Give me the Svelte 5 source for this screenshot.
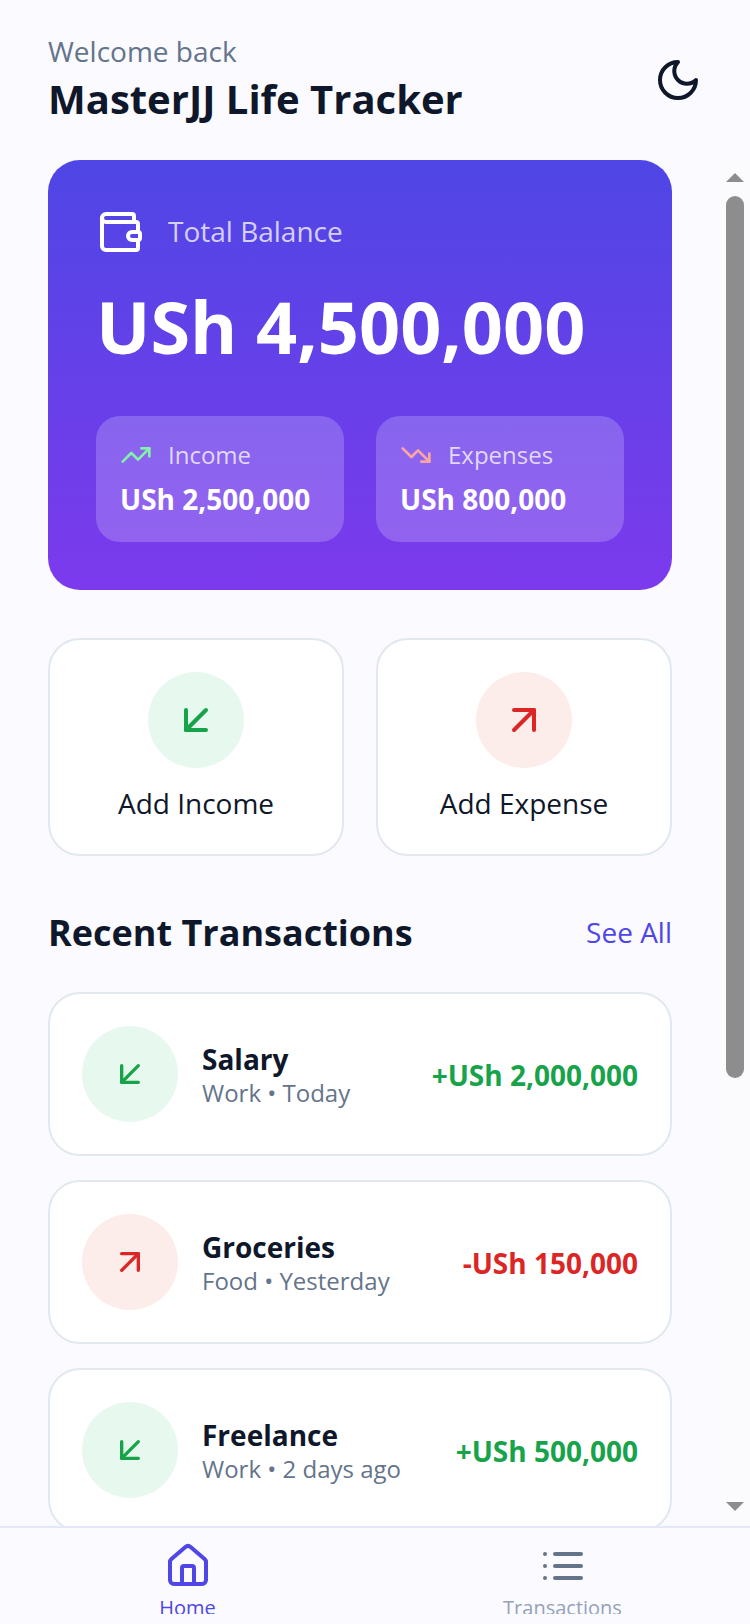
<script>
  const transactions = [
    { name: 'Salary', meta: 'Work • Today', amount: '+USh 2,000,000', income: true },
    { name: 'Groceries', meta: 'Food • Yesterday', amount: '-USh 150,000', income: false },
    { name: 'Freelance', meta: 'Work • 2 days ago', amount: '+USh 500,000', income: true },
  ];
</script>

{#snippet arrowIn(size)}
  <svg width={size} height={size} viewBox="0 0 24 24" fill="none" stroke="currentColor" stroke-width="2" stroke-linecap="round" stroke-linejoin="round">
    <path d="M17 7 7 17" /><path d="M17 17H7V7" />
  </svg>
{/snippet}

{#snippet arrowOut(size)}
  <svg width={size} height={size} viewBox="0 0 24 24" fill="none" stroke="currentColor" stroke-width="2" stroke-linecap="round" stroke-linejoin="round">
    <path d="M7 7h10v10" /><path d="M7 17 17 7" />
  </svg>
{/snippet}

<div class="app">
  <header class="header">
    <div>
      <p class="welcome">Welcome back</p>
      <h1 class="title">MasterJJ Life Tracker</h1>
    </div>
    <svg class="moon" width="48" height="48" viewBox="0 0 24 24" fill="none" stroke="currentColor" stroke-width="2" stroke-linecap="round" stroke-linejoin="round">
      <path d="M12 3a6 6 0 0 0 9 9 9 9 0 1 1-9-9Z" />
    </svg>
  </header>

  <div class="body">
    <main class="main">
      <section class="balance">
        <div class="balance-head">
          <svg class="wallet" width="48" height="48" viewBox="0 0 24 24" fill="none" stroke="currentColor" stroke-width="2" stroke-linecap="round" stroke-linejoin="round">
            <path d="M19 7V4a1 1 0 0 0-1-1H5a2 2 0 0 0 0 4h15a1 1 0 0 1 1 1v4h-3a2 2 0 0 0 0 4h3a1 1 0 0 0 1-1v-2a1 1 0 0 0-1-1" />
            <path d="M3 5v14a2 2 0 0 0 2 2h15a1 1 0 0 0 1-1v-4" />
          </svg>
          <span class="balance-label">Total Balance</span>
        </div>
        <div class="balance-value">USh 4,500,000</div>
        <div class="stats">
          <div class="stat">
            <div class="stat-head">
              <svg class="up" width="32" height="32" viewBox="0 0 24 24" fill="none" stroke="currentColor" stroke-width="2" stroke-linecap="round" stroke-linejoin="round">
                <path d="M22 7 13.5 15.5 8.5 10.5 2 17" /><path d="M16 7h6v6" />
              </svg>
              <span>Income</span>
            </div>
            <div class="stat-value">USh 2,500,000</div>
          </div>
          <div class="stat">
            <div class="stat-head">
              <svg class="down" width="32" height="32" viewBox="0 0 24 24" fill="none" stroke="currentColor" stroke-width="2" stroke-linecap="round" stroke-linejoin="round">
                <path d="M22 17 13.5 8.5 8.5 13.5 2 7" /><path d="M16 17h6v-6" />
              </svg>
              <span>Expenses</span>
            </div>
            <div class="stat-value">USh 800,000</div>
          </div>
        </div>
      </section>

      <section class="actions">
        <button class="action">
          <span class="circle income">{@render arrowIn(48)}</span>
          <span>Add Income</span>
        </button>
        <button class="action">
          <span class="circle expense">{@render arrowOut(48)}</span>
          <span>Add Expense</span>
        </button>
      </section>

      <div class="section-head">
        <h2>Recent Transactions</h2>
        <span class="see-all">See All</span>
      </div>

      <ul class="list">
        {#each transactions as t}
          <li class="row">
            <span class="circle" class:income={t.income} class:expense={!t.income}>
              {#if t.income}{@render arrowIn(40)}{:else}{@render arrowOut(40)}{/if}
            </span>
            <div class="row-text">
              <div class="row-name">{t.name}</div>
              <div class="row-meta">{t.meta}</div>
            </div>
            <div class="row-amount" class:pos={t.income} class:neg={!t.income}>{t.amount}</div>
          </li>
        {/each}
      </ul>
    </main>

    <div class="rail">
      <span class="tri tri-up"></span>
      <span class="thumb"></span>
      <span class="tri tri-down"></span>
    </div>
  </div>

  <nav class="nav">
    <div class="tab active">
      <svg class="tab-icon" width="48" height="48" viewBox="0 0 24 24" fill="none" stroke="currentColor" stroke-width="2" stroke-linecap="round" stroke-linejoin="round">
        <path d="M15 21v-8a1 1 0 0 0-1-1h-4a1 1 0 0 0-1 1v8" />
        <path d="M3 10a2 2 0 0 1 .709-1.528l7-5.999a2 2 0 0 1 2.582 0l7 5.999A2 2 0 0 1 21 10v9a2 2 0 0 1-2 2H5a2 2 0 0 1-2-2z" />
      </svg>
      <span class="tab-label">Home</span>
    </div>
    <div class="tab">
      <svg class="tab-icon list-icon" width="48" height="48" viewBox="0 0 24 24" fill="none" stroke="currentColor" stroke-width="2" stroke-linecap="round" stroke-linejoin="round">
        <path d="M8 6h13" /><path d="M8 12h13" /><path d="M8 18h13" />
        <path d="M3 6h.01" /><path d="M3 12h.01" /><path d="M3 18h.01" />
      </svg>
      <span class="tab-label">Transactions</span>
    </div>
  </nav>
</div>

<style>
  :global(html), :global(body) {
    margin: 0;
    height: 100%;
  }

  .app {
    display: flex;
    flex-direction: column;
    height: 1624px;
    overflow: hidden;
    background: #fafaff;
    color: #0f172a;
    font-family: 'Open Sans', sans-serif;
  }

  .header {
    display: flex;
    justify-content: space-between;
    align-items: flex-start;
    box-sizing: border-box;
    height: 160px;
    padding: 31px 48px 0;
    flex: none;
  }

  .welcome {
    margin: 0;
    font-size: 28px;
    line-height: 40px;
    color: #64748b;
  }

  .title {
    margin: 0;
    font-size: 40px;
    line-height: 56px;
    font-weight: 700;
  }

  .moon {
    margin-top: 25px;
    color: #0f172a;
  }

  .body {
    display: flex;
    flex: 1;
    min-height: 0;
  }

  .main {
    flex: 1;
    min-width: 0;
    overflow: hidden;
    padding: 0 48px;
  }

  .rail {
    display: flex;
    flex-direction: column;
    align-items: center;
    flex: none;
    box-sizing: border-box;
    width: 30px;
    padding: 13px 0 15px;
    background: #fbfbfd;
  }

  .thumb {
    width: 18px;
    height: 882px;
    margin-top: 14px;
    border-radius: 9px;
    background: #8d8d8d;
  }

  .tri {
    width: 0;
    height: 0;
    border-left: 9px solid transparent;
    border-right: 9px solid transparent;
  }

  .tri-up {
    border-bottom: 9px solid #8d8d8d;
  }

  .tri-down {
    margin-top: auto;
    border-top: 9px solid #8d8d8d;
  }

  .balance {
    box-sizing: border-box;
    height: 430px;
    padding: 48px;
    border-radius: 32px;
    color: #fff;
    background: linear-gradient(180deg, #4f46e5, #7c3aed);
  }

  .balance-head {
    display: flex;
    align-items: center;
    gap: 24px;
    height: 48px;
    font-size: 28px;
    line-height: 38px;
    color: rgba(255, 255, 255, 0.75);
  }

  .balance-label {
    margin-bottom: 2px;
  }

  .wallet {
    color: #fff;
  }

  .balance-value {
    margin-top: 22px;
    font-size: 72px;
    line-height: 96px;
    font-weight: 700;
    color: #fff;
  }

  .stats {
    display: grid;
    grid-template-columns: 1fr 1fr;
    gap: 32px;
    margin-top: 42px;
  }

  .stat {
    box-sizing: border-box;
    height: 126px;
    padding: 23px 24px;
    border-radius: 24px;
    background: rgba(255, 255, 255, 0.2);
  }

  .stat-head {
    display: flex;
    align-items: center;
    gap: 16px;
    font-size: 24px;
    line-height: 32px;
    color: rgba(255, 255, 255, 0.75);
  }

  .up {
    color: #86efac;
  }

  .down {
    color: #fca5a5;
  }

  .stat-value {
    margin-top: 8px;
    font-size: 28px;
    line-height: 40px;
    font-weight: 700;
  }

  .actions {
    display: grid;
    grid-template-columns: 1fr 1fr;
    gap: 32px;
    margin-top: 48px;
  }

  .action {
    display: flex;
    flex-direction: column;
    align-items: center;
    gap: 15px;
    height: 218px;
    padding: 32px;
    box-sizing: border-box;
    background: #fff;
    border: 2px solid #e2e8f0;
    border-radius: 32px;
    color: #0f172a;
    font: inherit;
    font-size: 28px;
    line-height: 40px;
  }

  .circle {
    display: flex;
    align-items: center;
    justify-content: center;
    flex: none;
    width: 96px;
    height: 96px;
    border-radius: 50%;
  }

  .circle.income {
    background: #e7f8ee;
    color: #16a34a;
  }

  .circle.expense {
    background: #fcecea;
    color: #dc2626;
  }

  .section-head {
    display: flex;
    justify-content: space-between;
    align-items: center;
    margin-top: 49px;
  }

  .section-head h2 {
    margin: 0;
    font-size: 36px;
    line-height: 56px;
    font-weight: 700;
  }

  .see-all {
    margin-bottom: 2px;
    font-size: 28px;
    color: #4f46e5;
  }

  .list {
    display: flex;
    flex-direction: column;
    gap: 24px;
    margin: 31px 0 0;
    padding: 0;
    list-style: none;
  }

  .row {
    display: flex;
    align-items: center;
    gap: 24px;
    box-sizing: border-box;
    height: 164px;
    padding: 32px;
    background: #fff;
    border: 2px solid #e2e8f0;
    border-radius: 32px;
  }

  .row-text {
    flex: 1;
    min-width: 0;
    margin-top: 2px;
  }

  .row-name {
    font-size: 28px;
    line-height: 36px;
    font-weight: 700;
  }

  .row-meta {
    font-size: 24px;
    line-height: 32px;
    color: #64748b;
  }

  .row-amount {
    margin-top: 2px;
    font-size: 28px;
    font-weight: 700;
  }

  .pos {
    color: #16a34a;
  }

  .neg {
    color: #dc2626;
  }

  .nav {
    display: flex;
    flex: none;
    box-sizing: border-box;
    height: 98px;
    border-top: 2px solid #e2e8f8;
    background: #fafaff;
  }

  .tab {
    flex: 1;
    display: flex;
    flex-direction: column;
    align-items: center;
    height: 86px;
    overflow: hidden;
    padding-top: 14px;
    box-sizing: border-box;
    color: #94a3b8;
  }

  .tab.active {
    color: #4f46e5;
  }

  .tab-icon {
    flex: none;
  }

  .tab-label {
    flex: none;
    margin-top: 4px;
    font-size: 20px;
    line-height: 28px;
  }

  .list-icon {
    color: #64748b;
  }
</style>
